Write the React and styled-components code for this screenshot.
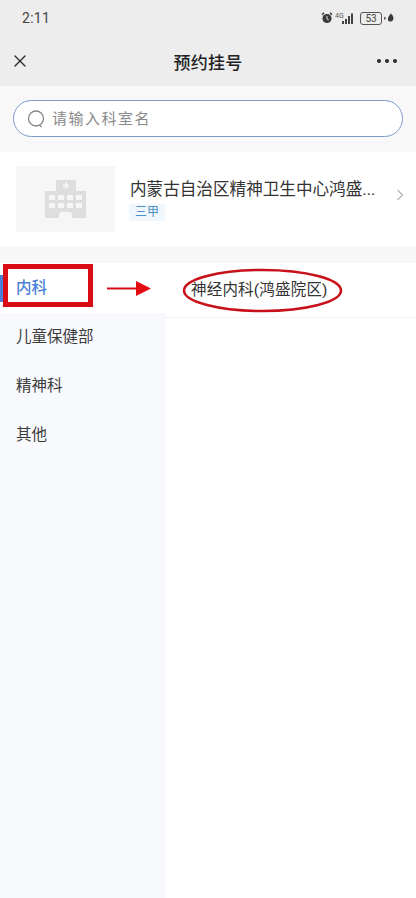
import React from 'react';
import styled, { createGlobalStyle } from 'styled-components';
import { X } from 'lucide-react';

const GlobalStyle = createGlobalStyle`
  html, body { margin: 0; padding: 0; background: #fff; }
  body { font-family: "Roboto", "Noto Sans CJK SC", "Liberation Sans", sans-serif; }
`;

const Page = styled.div`
  position: relative;
  width: 416px;
  height: 898px;
  overflow: hidden;
  display: flex;
  flex-direction: column;
  background: #fff;
`;

const TopArea = styled.header`
  background: #ededed;
  height: 86px;
  flex: none;
`;

const StatusBar = styled.div`
  height: 36px;
  padding: 0 22px 0 22px;
  display: flex;
  align-items: center;
  justify-content: space-between;
`;

const Clock = styled.span`
  font-size: 14px;
  color: #444;
  letter-spacing: 0.3px;
`;

const StatusIcons = styled.div`
  display: flex;
  align-items: center;
  gap: 2px;
`;

const Battery = styled.span`
  width: 20px;
  height: 11px;
  border: 1px solid #555;
  border-radius: 3px;
  font-size: 10px;
  line-height: 11px;
  text-align: center;
  color: #444;
  margin-left: 1px;
`;

const NavBar = styled.div`
  height: 50px;
  padding: 0 12px;
  display: flex;
  align-items: center;
  justify-content: space-between;
`;

const NavTitle = styled.h1`
  margin: 0;
  font-size: 17px;
  font-weight: 500;
  color: #222;
  letter-spacing: 0.3px;
  position: absolute;
  left: 0;
  right: 0;
  text-align: center;
  pointer-events: none;
`;

const Dots = styled.div`
  display: flex;
  gap: 4px;
  margin-right: 7px;
`;

const Dot = styled.i`
  width: 4px;
  height: 4px;
  border-radius: 50%;
  background: #2a2a2a;
`;

const SearchArea = styled.div`
  background: #f8f8f8;
  height: 66px;
  flex: none;
  padding: 14px 13px 0;
  box-sizing: border-box;
`;

const SearchBox = styled.div`
  height: 37px;
  box-sizing: border-box;
  border: 1px solid #7d9cc4;
  border-radius: 19px;
  background: #fff;
  display: flex;
  align-items: center;
  padding-left: 13px;
  gap: 5px;
`;

const SearchText = styled.span`
  font-size: 15px;
  color: #8a8a8a;
  letter-spacing: 1.5px;
  padding-bottom: 3px;
`;

const HospitalCard = styled.section`
  height: 94px;
  flex: none;
  background: #fff;
  display: flex;
  align-items: center;
  padding: 0 12px 0 16px;
`;

const Thumb = styled.div`
  width: 99px;
  height: 66px;
  background: #f6f6f6;
  flex: none;
  display: flex;
  align-items: center;
  justify-content: center;
`;

const HospitalInfo = styled.div`
  flex: 1;
  min-width: 0;
  margin-left: 15px;
  display: flex;
  flex-direction: column;
  gap: 2px;
`;

const HospitalName = styled.div`
  font-size: 16.6px;
  line-height: 24px;
  color: #333;
  white-space: nowrap;
`;

const Grade = styled.span`
  align-self: flex-start;
  margin-left: -1px;
  background: #f0f7fd;
  color: #4d8fc4;
  font-size: 12px;
  line-height: 17px;
  padding: 0 6px;
  border-radius: 2px;
`;

const Divider = styled.div`
  height: 17px;
  flex: none;
  background: #f7f7f7;
`;

const Body = styled.div`
  flex: 1;
  display: flex;
  min-height: 0;
`;

const Sidebar = styled.nav`
  width: 166px;
  flex: none;
  background: #f8f9fd;
`;

const DeptItem = styled.div`
  position: relative;
  height: 49px;
  box-sizing: border-box;
  padding: 0 16px 4px;
  display: flex;
  align-items: center;
  font-size: 15.5px;
  font-weight: ${(p) => (p.$active ? 500 : 400)};
  color: ${(p) => (p.$active ? '#4a80d8' : '#3c3c3c')};
  background: ${(p) => (p.$active ? '#fff' : 'transparent')};
  box-shadow: ${(p) => (p.$active ? '0 1px 0 #fff' : 'none')};
`;

const ActiveBar = styled.span`
  position: absolute;
  left: 0;
  top: 12px;
  width: 3px;
  height: 27px;
  background: #4a80d8;
`;

const DeptList = styled.div`
  flex: 1;
  background: #fff;
`;

const SubDept = styled.div`
  height: 55px;
  box-sizing: border-box;
  padding: 0 0 5px 25px;
  display: flex;
  align-items: center;
  font-size: 15.5px;
  letter-spacing: 0.2px;
  color: #333;
  border-bottom: 1px solid #f3f3f3;
`;

const RedBox = styled.div`
  position: absolute;
  left: 3px;
  top: 264px;
  width: 90px;
  height: 43px;
  box-sizing: border-box;
  border: 5px solid #d80c14;
`;

const Markup = styled.svg`
  position: absolute;
  left: 100px;
  top: 262px;
`;

export default function App() {
  const depts = ['内科', '儿童保健部', '精神科', '其他'];

  return (
    <Page>
      <GlobalStyle />
      <TopArea>
        <StatusBar>
          <Clock>2:11</Clock>
          <StatusIcons>
            <svg width="12" height="12" viewBox="0 0 12 12">
              <circle cx="6" cy="6.500" r="4.600" fill="#3a3a3a" />
              <path d="M1 2.600L3 .9M11 2.600L9 .9" stroke="#3a3a3a" strokeWidth="1.400" />
              <path d="M6 4v3l1.800 1" stroke="#ddd" strokeWidth="1" fill="none" />
            </svg>
            <svg width="22" height="13" viewBox="0 0 22 13">
              <text x="0" y="6" fontSize="7" fill="#555" fontFamily="Roboto, sans-serif">4G</text>
              <rect x="7" y="9" width="2" height="3" fill="#444" />
              <rect x="10" y="7" width="2" height="5" fill="#444" />
              <rect x="13" y="4" width="2" height="8" fill="#444" />
              <rect x="16" y="1.500" width="2" height="10.500" fill="#444" />
            </svg>
            <Battery>53</Battery>
            <svg width="10" height="10" viewBox="0 0 10 10">
              <rect x="0" y="4" width="1.500" height="2.500" fill="#555" />
              <path d="M7 .5C9.500 3 10 5 9 7C8 9 4.500 9.200 4 7C3.500 5 5 2.500 7 .5Z" fill="#3a3a3a" />
            </svg>
          </StatusIcons>
        </StatusBar>
        <NavBar>
          <X size={20} strokeWidth={1.600} color="#2a2a2a" style={{ marginLeft: -2 }} />
          <NavTitle>预约挂号</NavTitle>
          <Dots>
            <Dot />
            <Dot />
            <Dot />
          </Dots>
        </NavBar>
      </TopArea>

      <SearchArea>
        <SearchBox>
          <svg width="20" height="20" viewBox="0 0 20 20" fill="none" stroke="#8a8a8a" strokeWidth="1.300">
            <circle cx="9" cy="9.500" r="7.500" />
            <path d="M12.500 16.300L14.500 18" />
          </svg>
          <SearchText>请输入科室名</SearchText>
        </SearchBox>
      </SearchArea>

      <HospitalCard>
        <Thumb>
          <svg width="41" height="38" viewBox="0 0 41 38">
            <path d="M11 0H31V11H41V38H0V11H11Z" fill="#dedede" />
            <path d="M21 2.500v6M18 5.500h6" stroke="#f6f6f6" strokeWidth="2" />
            <g fill="#f6f6f6">
              <rect x="4" y="15" width="6" height="5" />
              <rect x="13" y="15" width="6" height="5" />
              <rect x="22" y="15" width="6" height="5" />
              <rect x="31" y="15" width="6" height="5" />
              <rect x="4" y="23" width="6" height="5" />
              <rect x="13" y="23" width="6" height="5" />
              <rect x="22" y="23" width="6" height="5" />
              <rect x="31" y="23" width="6" height="5" />
            </g>
            <path d="M14 38v-3q0-3 3-3h7q3 0 3 3v3Z" fill="#f6f6f6" />
          </svg>
        </Thumb>
        <HospitalInfo>
          <HospitalName>内蒙古自治区精神卫生中心鸿盛...</HospitalName>
          <Grade>三甲</Grade>
        </HospitalInfo>
        <svg width="8" height="12" viewBox="0 0 8 12" fill="none" stroke="#b5b5b5" strokeWidth="1.200" style={{ marginBottom: 8 }}>
          <path d="M1.500 1L6.500 6L1.500 11" />
        </svg>
      </HospitalCard>

      <Divider />

      <Body>
        <Sidebar>
          {depts.map((name, i) => (
            <DeptItem key={name} $active={i === 0}>
              {i === 0 && <ActiveBar />}
              {name}
            </DeptItem>
          ))}
        </Sidebar>
        <DeptList>
          <SubDept>神经内科(鸿盛院区)</SubDept>
        </DeptList>
      </Body>

      <RedBox />
      <Markup width="250" height="54" viewBox="0 0 250 54" fill="none">
        <path d="M7 26.500H38" stroke="#d80c14" strokeWidth="2" />
        <path d="M36 19L51 26.500L36 34Z" fill="#e30a12" />
        <ellipse cx="162.500" cy="28.500" rx="78.500" ry="20.500" stroke="#c8101a" strokeWidth="2.500" />
      </Markup>
    </Page>
  );
}
